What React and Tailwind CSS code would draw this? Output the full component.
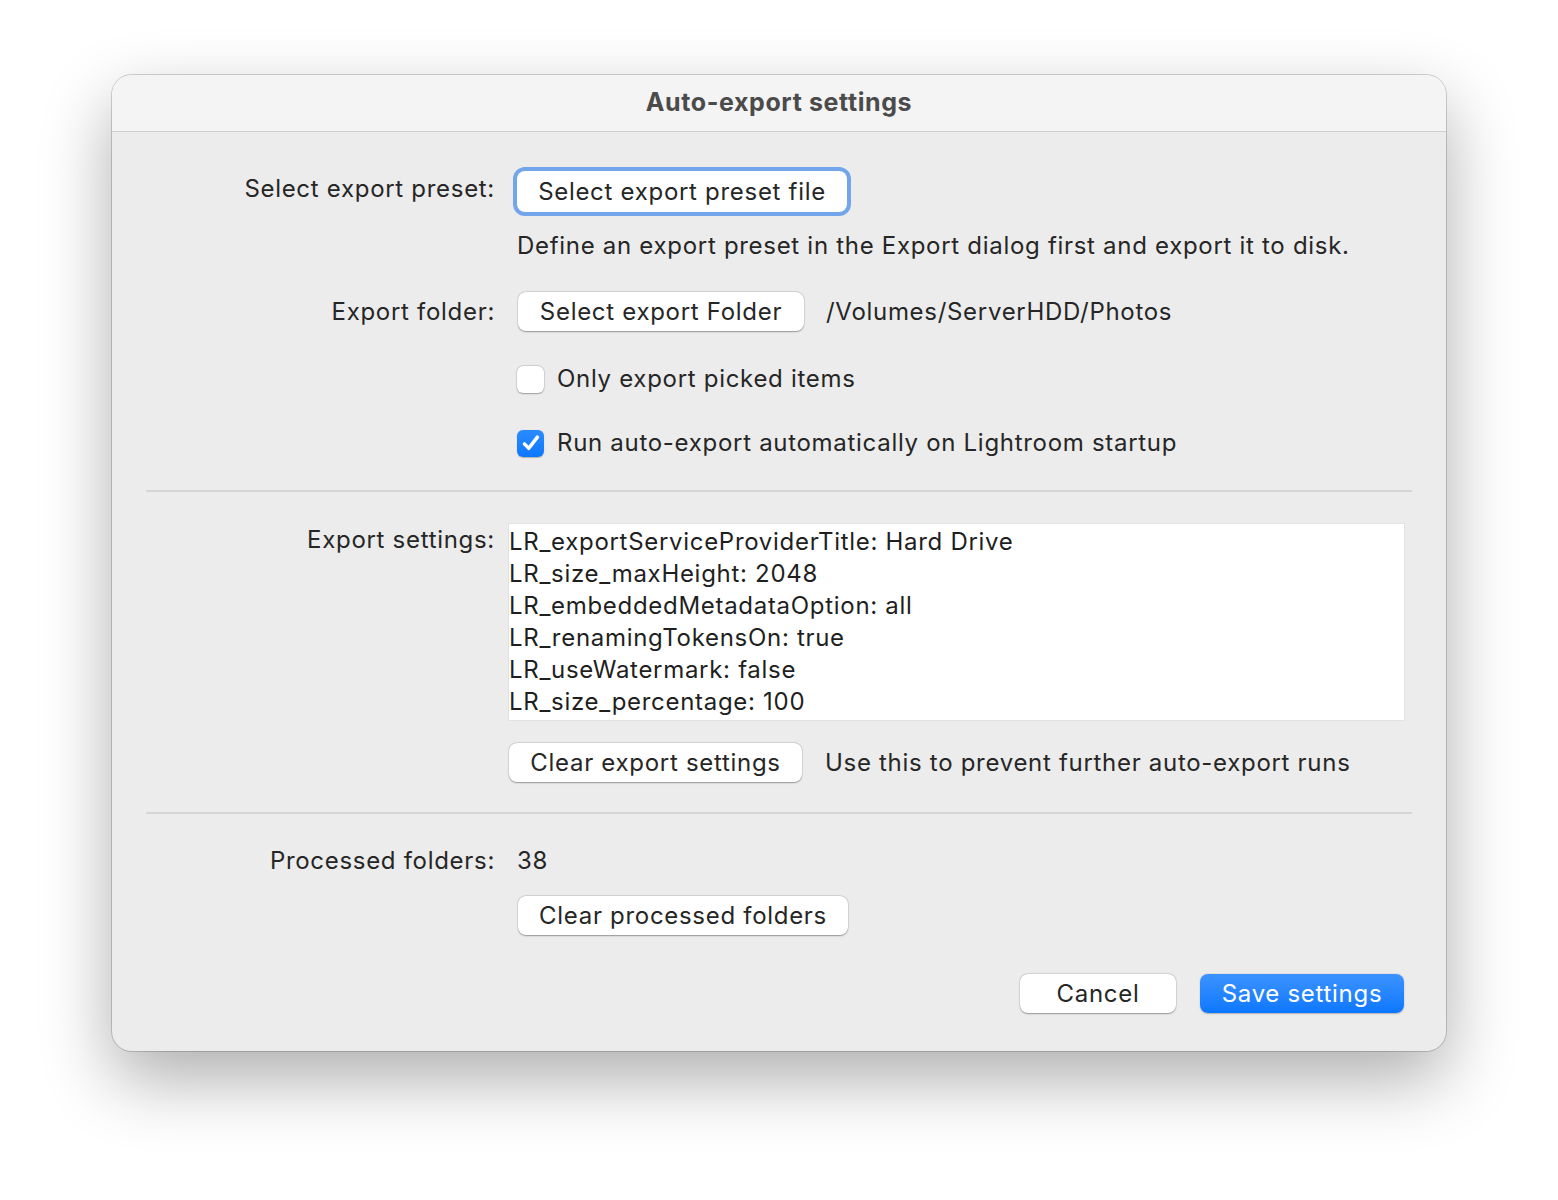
import React from "react";

const font = { fontFamily: "Inter, 'Open Sans', 'Liberation Sans', sans-serif" };

function Btn({ w, children, className = "" }) {
  return (
    <div
      className={`h-[39px] ${w} flex items-center justify-center rounded-[8px] bg-white text-[24px] tracking-[0.7px] text-[#262626] shadow-[0_0.5px_1.5px_rgba(0,0,0,0.35),0_0_0_0.5px_rgba(0,0,0,0.08)] ${className}`}
    >
      {children}
    </div>
  );
}

function Check({ checked }) {
  if (checked) {
    return (
      <div className="w-[27px] h-[27px] rounded-[6px] bg-gradient-to-b from-[#2a8bff] to-[#0a78ff] flex items-center justify-center shadow-[0_0.5px_1px_rgba(0,0,0,0.25)]">
        <svg width="22" height="22" viewBox="0 0 20 20">
          <path d="M4 10.8 L8 14.8 L15.8 4.6" fill="none" stroke="white" strokeWidth="3.2" strokeLinecap="round" strokeLinejoin="round" />
        </svg>
      </div>
    );
  }
  return (
    <div className="w-[27px] h-[27px] rounded-[6px] bg-white shadow-[0_0.5px_1.5px_rgba(0,0,0,0.3),0_0_0_0.5px_rgba(0,0,0,0.12)]" />
  );
}

function Label({ children, className = "" }) {
  return (
    <div className={`w-[383px] shrink-0 text-right text-[24px] tracking-[0.7px] text-[#262626] ${className}`}>{children}</div>
  );
}

const T = "text-[24px] tracking-[0.7px] text-[#262626]";

export default function App() {
  const lines = [
    "LR_exportServiceProviderTitle: Hard Drive",
    "LR_size_maxHeight: 2048",
    "LR_embeddedMetadataOption: all",
    "LR_renamingTokensOn: true",
    "LR_useWatermark: false",
    "LR_size_percentage: 100",
  ];
  return (
    <div className="w-[1558px] h-[1200px] bg-white pt-[75px] pl-[112px]" style={font}>
      <div className="w-[1334px] h-[976px] rounded-[20px] bg-[#ececec] overflow-hidden shadow-[0_28px_70px_rgba(0,0,0,0.32),0_0_0_1px_rgba(0,0,0,0.17)] flex flex-col">
        <div className="h-[57px] shrink-0 bg-[#f4f4f4] border-b border-[#cfcfcf] flex items-center justify-center text-[25px] tracking-[0.6px] font-bold text-[#4b4b4b]">
          Auto-export settings
        </div>
        <div className="flex flex-col">
          {/* Row 1 */}
          <div className="flex items-center h-[49px] mt-[35px]">
            <Label className="-mt-[5px]">Select export preset:</Label>
            <div className="ml-[18px] p-[4px] rounded-[12px] bg-[#73a5ea]">
              <Btn w="w-[330px]" className="h-[41px] shadow-none">Select export preset file</Btn>
            </div>
          </div>
          <div className="flex items-center h-[30px] mt-[15px]">
            <div className="w-[383px]" />
            <div className={`ml-[22px] ${T}`}>
              Define an export preset in the Export dialog first and export it to disk.
            </div>
          </div>
          {/* Export folder */}
          <div className="flex items-center h-[39px] mt-[31px]">
            <Label>Export folder:</Label>
            <Btn w="w-[286px]" className="ml-[23px]">Select export Folder</Btn>
            <div className={`ml-[22px] ${T}`}>/Volumes/ServerHDD/Photos</div>
          </div>
          {/* Checkbox 1 */}
          <div className="flex items-center h-[30px] mt-[33px]">
            <div className="w-[383px]" />
            <div className="ml-[22px]"><Check checked={false} /></div>
            <div className={`ml-[13px] ${T}`}>Only export picked items</div>
          </div>
          <div className="flex items-center h-[30px] mt-[34px]">
            <div className="w-[383px]" />
            <div className="ml-[22px]"><Check checked={true} /></div>
            <div className={`ml-[13px] ${T}`}>Run auto-export automatically on Lightroom startup</div>
          </div>
          <div className="mx-[34px] h-[2px] bg-[#d6d6d6] mt-[32px]" />
          {/* Export settings */}
          <div className="flex items-start mt-[31px]">
            <Label className="leading-[32px] mt-[1px]">Export settings:</Label>
            <div className="ml-[13px] w-[897px] h-[198px] bg-white border border-[#e2e2e2] pt-[2px] text-[24px] tracking-[0.7px] leading-[32px] text-[#1f1f1f]">
              {lines.map((l) => (
                <div key={l}>{l}</div>
              ))}
            </div>
          </div>
          <div className="flex items-center h-[39px] mt-[22px]">
            <div className="w-[383px]" />
            <Btn w="w-[293px]" className="ml-[14px]">Clear export settings</Btn>
            <div className={`ml-[23px] ${T}`}>Use this to prevent further auto-export runs</div>
          </div>
          <div className="mx-[34px] h-[2px] bg-[#d6d6d6] mt-[30px]" />
          {/* Processed folders */}
          <div className="flex items-center h-[30px] mt-[32px]">
            <Label>Processed folders:</Label>
            <div className={`ml-[22px] ${T}`}>38</div>
          </div>
          <div className="flex items-center h-[39px] mt-[20px]">
            <div className="w-[383px]" />
            <Btn w="w-[330px]" className="ml-[23px]">Clear processed folders</Btn>
          </div>
          <div className="flex justify-end items-center h-[39px] mt-[39px] pr-[42px] gap-[24px]">
            <Btn w="w-[156px]">Cancel</Btn>
            <div className="h-[39px] w-[204px] flex items-center justify-center rounded-[8px] bg-gradient-to-b from-[#3a93ff] to-[#0a77ff] text-[24px] tracking-[0.7px] text-white shadow-[0_0.5px_1.5px_rgba(0,0,0,0.25)]">
              Save settings
            </div>
          </div>
        </div>
      </div>
    </div>
  );
}
